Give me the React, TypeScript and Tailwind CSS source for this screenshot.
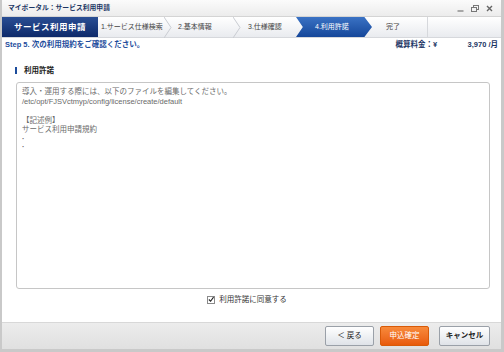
import React from 'react'

const FONT = 'font-["Liberation_Sans","Noto_Sans_CJK_JP",sans-serif]'

function Chevron({ color = '#c9ccd2' }: { color?: string }) {
  return (
    <svg width="8" height="21" viewBox="0 0 8 21" className="shrink-0">
      <polyline points="0,0 7,10.5 0,21" fill="none" stroke={color} strokeWidth="1" />
    </svg>
  )
}

function StepBar() {
  return (
    <div className="flex h-[21px] whitespace-nowrap bg-gradient-to-b from-[#ffffff] to-[#e9ebef] border-b border-[#d6d8dc] text-[7px] text-[#444]">
      <div className="w-[96px] flex items-center justify-center bg-gradient-to-b from-[#2a4e94] to-[#0e2a6a] text-white font-bold text-[8.5px] tracking-[0.5px]">
        サービス利用申請
      </div>
      <div className="w-[74px] flex items-center">
        <span className="flex-1 pl-[3px]">1.サービス仕様検索</span>
        <Chevron />
      </div>
      <div className="w-[69px] flex items-center">
        <span className="flex-1 pl-[6px]">2.基本情報</span>
        <Chevron />
      </div>
      <div className="w-[56px] flex items-center">
        <span className="flex-1 pl-[7px]">3.仕様確認</span>
      </div>
      <div className="w-[76px] -ml-[1px] flex items-center pl-[19px] text-white bg-gradient-to-b from-[#3a72c4] to-[#15479a] [clip-path:polygon(0_0,90%_0,100%_50%,90%_100%,0_100%,9%_50%)]">
        4.利用許諾
      </div>
      <div className="w-[56px] flex items-center pl-[14px] border-r border-[#d6d8dc]">完了</div>
      <div className="flex-1" />
    </div>
  )
}

export default function App() {
  return (
    <div className={`${FONT} w-[504px] h-[352px] bg-white flex flex-col border-l-2 border-r-[3px] border-b-[3px] border-[#c9c9c9] overflow-hidden`}>
      {/* title bar */}
      <div className="h-[17px] shrink-0 flex items-center justify-between pl-[6px] pr-[8px] bg-gradient-to-b from-[#fbfbfb] to-[#ececec] border-b border-[#d4d4d4]">
        <span className="text-[6.8px] font-bold text-[#1c3664]">マイポータル：サービス利用申請</span>
        <div className="flex items-center gap-[7px]">
          <svg width="7" height="7" viewBox="0 0 7 7">
            <line x1="0.5" y1="6" x2="6.5" y2="6" stroke="#777" strokeWidth="1.2" />
          </svg>
          <svg width="8" height="7" viewBox="0 0 8 7">
            <rect x="2.5" y="0.5" width="5" height="4" fill="none" stroke="#777" strokeWidth="1" />
            <rect x="0.5" y="2.5" width="5" height="4" fill="#f2f2f2" stroke="#777" strokeWidth="1" />
          </svg>
          <svg width="7" height="7" viewBox="0 0 7 7">
            <path d="M1 1 L6 6 M6 1 L1 6" stroke="#666" strokeWidth="1.4" />
          </svg>
        </div>
      </div>

      <StepBar />

      {/* content */}
      <div className="flex-1 flex flex-col px-[3px]">
        <div className="h-[14px] flex items-center justify-between">
          <span className="text-[7.5px] font-bold text-[#1c4c9c]">Step 5. 次の利用規約をご確認ください。</span>
          <div className="flex items-center text-[7.5px] font-bold text-[#1c3664]">
            <span className="w-[72px]">概算料金：¥</span>
            <span>3,970 /月</span>
          </div>
        </div>

        <div className="mt-[13px] ml-[10px] flex items-center gap-[7px]">
          <span className="w-[2px] h-[7px] bg-[#1c4c9c]" />
          <span className="text-[7.5px] font-bold text-[#222]">利用許諾</span>
        </div>

        <div className="mt-[6px] ml-[11px] mr-[8px] h-[207px] border border-[#c6c6c6] rounded-[3px] px-[5px] pt-[4px] text-[7.5px] leading-[9.5px] text-[#6a6a6a]">
          <div>導入・運用する際には、以下のファイルを編集してください。</div>
          <div>/etc/opt/FJSVctmyp/config/license/create/default</div>
          <div>&nbsp;</div>
          <div>【記述例】</div>
          <div>サービス利用申請規約</div>
          <div className="leading-[8px] font-bold">·</div>
          <div className="leading-[8px] font-bold">·</div>
        </div>

        <div className="mt-[5px] flex items-center justify-center gap-[4px] pr-[9px]">
          <span className="w-[8px] h-[8px] border border-[#8a8a8a] bg-white flex items-center justify-center">
            <svg width="7" height="7" viewBox="0 0 7 7">
              <polyline points="1,3.5 3,5.5 6.5,0.8" fill="none" stroke="#222" strokeWidth="1.3" />
            </svg>
          </span>
          <span className="text-[7.5px] text-[#333]">利用許諾に同意する</span>
        </div>
      </div>

      {/* footer */}
      <div className="h-[27px] shrink-0 flex items-center justify-end gap-[6px] pr-[11px] bg-gradient-to-b from-[#ececec] to-[#e0e0e0] border-t border-[#d8d8d8]">
        <button className="w-[49px] h-[20px] rounded-[2px] border border-[#9aa0a8] bg-gradient-to-b from-[#ffffff] to-[#dfe3e8] text-[7.5px] text-[#222]">
          ＜ 戻る
        </button>
        <button className="w-[49px] h-[20px] rounded-[2px] border border-[#d85a08] bg-gradient-to-b from-[#f88a3a] to-[#e85a08] text-[7.5px] text-white">
          申込確定
        </button>
        <button className="ml-[4px] w-[51px] h-[20px] rounded-[2px] border border-[#9aa0a8] bg-gradient-to-b from-[#ffffff] to-[#dfe3e8] text-[7.5px] font-bold text-[#222]">
          キャンセル
        </button>
      </div>
    </div>
  )
}
